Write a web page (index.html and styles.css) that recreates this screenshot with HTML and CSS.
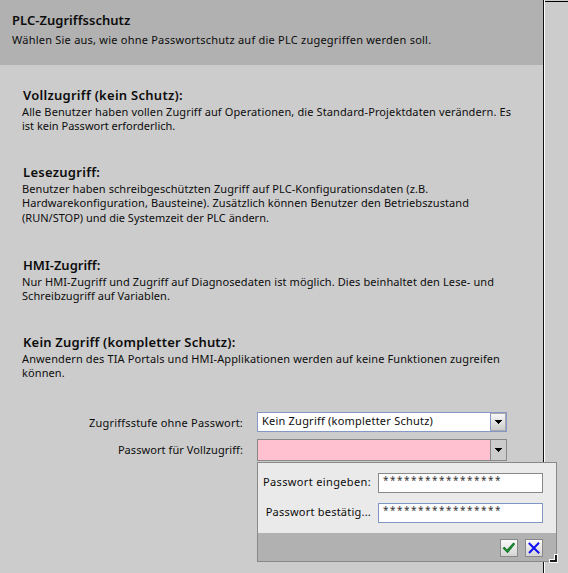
FILE: index.html
```html
<!DOCTYPE html>
<html lang="de">
<head>
<meta charset="utf-8">
<title>PLC-Zugriffsschutz</title>
<link rel="stylesheet" href="styles.css">
</head>
<body>
<div class="window">
  <main class="panel">
    <header class="head">
      <h1 class="title t1">PLC-Zugriffsschutz</h1>
      <p class="line l0">Wählen Sie aus, wie ohne Passwortschutz auf die PLC zugegriffen werden soll.</p>
    </header>
    <section class="level first">
      <h2 class="title t2">Vollzugriff (kein Schutz):</h2>
      <p><span class="line l1">Alle Benutzer haben vollen Zugriff auf Operationen, die Standard-Projektdaten verändern. Es</span>
      <span class="line l2">ist kein Passwort erforderlich.</span></p>
    </section>
    <section class="level second">
      <h2 class="title t3">Lesezugriff:</h2>
      <p><span class="line l3">Benutzer haben schreibgeschützten Zugriff auf PLC-Konfigurationsdaten (z.B.</span>
      <span class="line l4">Hardwarekonfiguration, Bausteine). Zusätzlich können Benutzer den Betriebszustand</span>
      <span class="line l5">(RUN/STOP) und die Systemzeit der PLC ändern.</span></p>
    </section>
    <section class="level third">
      <h2 class="title t4">HMI-Zugriff:</h2>
      <p><span class="line l6">Nur HMI-Zugriff und Zugriff auf Diagnosedaten ist möglich. Dies beinhaltet den Lese- und</span>
      <span class="line l7">Schreibzugriff auf Variablen.</span></p>
    </section>
    <section class="level fourth">
      <h2 class="title t5">Kein Zugriff (kompletter Schutz):</h2>
      <p><span class="line l8">Anwendern des TIA Portals und HMI-Applikationen werden auf keine Funktionen zugreifen</span>
      <span class="line l9">können.</span></p>
    </section>
    <form class="form">
      <div class="row">
        <label class="label"><span class="line la">Zugriffsstufe ohne Passwort:</span></label>
        <div class="combo">
          <div class="value"><span class="line lb">Kein Zugriff (kompletter Schutz)</span></div>
          <div class="drop"><svg width="7" height="4" viewBox="0 0 7 4" shape-rendering="crispEdges"><path d="M0 0h7v1H6v1H5v1H4v1H3V3H2V2H1V1H0z"/></svg></div>
        </div>
      </div>
      <div class="row error">
        <label class="label"><span class="line lc">Passwort für Vollzugriff:</span></label>
        <div class="combo invalid">
          <div class="value"></div>
          <div class="drop"><svg width="7" height="4" viewBox="0 0 7 4" shape-rendering="crispEdges"><path d="M0 0h7v1H6v1H5v1H4v1H3V3H2V2H1V1H0z"/></svg></div>
          <div class="popup">
            <div class="fields">
              <div class="field"><span class="caption"><span class="line ld">Passwort eingeben:</span></span><div class="input">*****************</div></div>
              <div class="field"><span class="caption"><span class="line le">Passwort bestätig...</span></span><div class="input active">*****************</div></div>
            </div>
            <div class="actions">
              <div class="button"><svg width="14" height="12" viewBox="0 0 14 12"><path d="M.5 6.2 2.4 4.7 5 7.6 11.4.5 13.2 2 5.6 11.2z" fill="#0d6e22"/><path d="M1.6 6.2 5.1 9.4 12 1.8" fill="none" stroke="#2fae45" stroke-width=".8"/></svg></div>
              <div class="button"><svg width="12" height="12" viewBox="0 0 12 12"><path d="M.8 1 11.2 11.2M11 .8 1 11" fill="none" stroke="#1212f0" stroke-width="2"/></svg></div>
            </div>
            <svg class="grip" width="9" height="9" viewBox="0 0 9 9" shape-rendering="crispEdges"><path fill="#fff" d="M5 0h4v9H0V5h5z"/><path fill="#1a1a1a" d="M6 1h2v7H1V6h5z"/></svg>
          </div>
        </div>
      </div>
    </form>
  </main>
  <aside class="side"></aside>
</div>
</body>
</html>
```
FILE: styles.css
```css
* { box-sizing: border-box; }
body, h1, h2, p { margin: 0; }
body {
  background: #ccc;
  color: #0c0c0c;
  font: 11px/14px "Noto Sans", sans-serif;
  overflow: hidden;
}
.window { display: flex; height: 573px; }
.panel { width: 544px; border-right: 1px solid #111; }
.side {
  flex: 1;
  border-left: 1px solid #fff;
  background: linear-gradient(#000, #000) 0 1px / 100% 1px no-repeat;
}
.head { height: 65px; padding: 12px; background: #b1b1b1; }
.title { font-size: 13px; line-height: 16px; font-weight: 600; white-space: nowrap; }
.line { display: block; width: max-content; white-space: nowrap; }
.head .line { margin-top: 5px; }
.level { height: 77px; padding-left: 22px; }
.level .title { padding-left: 1px; }
.first { margin-top: 22px; }
.second { height: 93px; }
.level p { padding-top: 2px; }
.t1 { letter-spacing: .03px; }
.t2 { letter-spacing: .27px; }
.t3 { letter-spacing: .28px; }
.t5 { letter-spacing: .19px; }
.l0 { letter-spacing: .228px; }
.l1 { letter-spacing: .118px; }
.l3 { letter-spacing: .09px; }
.l4 { letter-spacing: .09px; }
.l5 { margin-top: 1px; }
.l6 { letter-spacing: .1px; }
.l7 { letter-spacing: .07px; }
.l8 { letter-spacing: .12px; }
.l9 { letter-spacing: .1px; }
.la { letter-spacing: .2px; }
.lb { letter-spacing: .22px; }
.lc { letter-spacing: .07px; }
.ld { letter-spacing: .36px; }
.le { letter-spacing: .22px; }
.form { margin-top: -2px; padding-top: 3px; }
.row { display: flex; align-items: center; height: 20px; }
.error { height: 22px; margin-top: 7px; }
.label { display: flex; justify-content: flex-end; width: 243px; margin-right: 14px; padding-top: 2px; }
.error .label { padding-top: 0; }
.combo { position: relative; display: flex; width: 250px; height: 20px; border: 1px solid #8597c4; background: #fff; }
.value { flex: 1; padding: 1px 0 0 4px; }
.drop {
  display: flex;
  align-items: center;
  justify-content: center;
  width: 16px;
  border: 1px solid #aaa;
  border-left-color: #8597c4;
  background: linear-gradient(#f7f7f7, #ccc);
}
.invalid { height: 22px; border-color: #888; background: #ffc0cf; }
.invalid .drop { border: 0; border-left: 1px solid #888; background: #ccc; }
.popup { position: absolute; top: 22px; left: -1px; width: 300px; height: 100px; border: 1px solid #888; background: #eaeaea; }
.fields { display: flex; flex-direction: column; gap: 10px; height: 70px; padding-top: 10px; }
.field { display: flex; align-items: center; }
.caption { display: flex; justify-content: flex-end; width: 113px; margin-right: 7px; padding-bottom: 3px; }
.input {
  width: 165px;
  height: 20px;
  padding-left: 4px;
  border: 1px solid #888;
  background: #fff;
  color: #333;
  font-size: 10px;
  line-height: 12px;
  letter-spacing: 1.49px;
}
.input.active { border-color: #7f96c4; }
.actions { display: flex; justify-content: flex-end; gap: 7px; height: 28px; padding: 6px 13px 0; background: #b1b1b1; }
.button { display: flex; align-items: center; justify-content: center; width: 18px; height: 18px; border: 1px solid #888; background: linear-gradient(#fafafa, #d4d4d4); }
.grip { position: absolute; right: -2px; bottom: -2px; }
```
